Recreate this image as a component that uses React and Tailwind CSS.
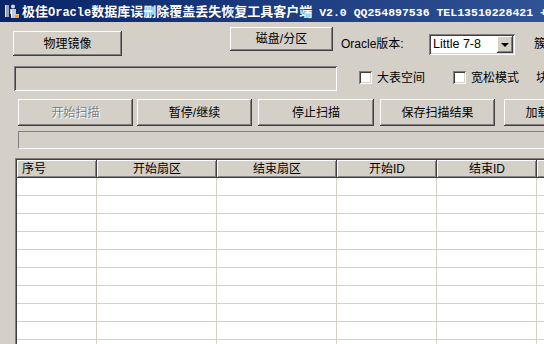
import React from 'react';

const raised = "bg-[#d4d0c8] shadow-[inset_-1px_-1px_0_#404040,inset_1px_1px_0_#ffffff,inset_-2px_-2px_0_#808080,inset_2px_2px_0_#d4d0c8]";
const sunken = "shadow-[inset_1px_1px_0_#808080,inset_-1px_-1px_0_#ffffff,inset_2px_2px_0_#404040,inset_-2px_-2px_0_#d4d0c8]";

const columns = [
  { label: '序号', w: 'w-[80px]', left: true },
  { label: '开始扇区', w: 'w-[120px]' },
  { label: '结束扇区', w: 'w-[120px]' },
  { label: '开始ID', w: 'w-[100px]' },
  { label: '结束ID', w: 'w-[100px]' },
  { label: '', w: 'w-[100px]' },
];

function Button({ children, className, disabled }) {
  return (
    <div className={`${raised} ${className} shrink-0 flex items-center justify-center text-[12px]`}>
      <span className={disabled ? 'text-[#808080] [text-shadow:1px_1px_0_#ffffff]' : 'text-black'}>{children}</span>
    </div>
  );
}

function Checkbox({ label, className }) {
  return (
    <div className={`flex items-center shrink-0 ${className}`}>
      <div className={`w-[13px] h-[13px] bg-white ${sunken}`} />
      <span className="ml-[5px] text-[12px] text-black">{label}</span>
    </div>
  );
}

function AppIcon() {
  return (
    <svg width="16" height="16" viewBox="0 0 16 16" className="shrink-0">
      <rect x="1" y="2" width="4" height="12" fill="#9aa3b5" />
      <rect x="1" y="2" width="1" height="12" fill="#e8ecf4" />
      <circle cx="9" cy="3.5" r="2" fill="#d8dce4" />
      <path d="M6 6h6v5h-1v4H7v-4H6z" fill="#c4c9d4" />
      <path d="M7 7h1v7H7z" fill="#ffffff" />
      <rect x="11" y="11" width="4" height="4" fill="#f0a020" />
      <rect x="11" y="11" width="4" height="1" fill="#ffd070" />
    </svg>
  );
}

function TitleBar() {
  const cjk = "font-['Noto_Sans_CJK_SC',sans-serif] text-[13px] leading-none";
  const mono = "font-['Liberation_Mono',monospace] leading-none";
  return (
    <div className="h-[22px] shrink-0 flex items-center pl-[4px] bg-gradient-to-r from-[#0a246a] to-[#2f5394] text-white font-bold whitespace-nowrap overflow-hidden">
      <AppIcon />
      <div className="ml-[2px] flex items-baseline">
        <span className={cjk}>极佳</span>
        <span className={`${mono} text-[12px]`}>Oracle</span>
        <span className={cjk}>数据库误删除覆盖丢失恢复工具客户端</span>
        <span className={`${mono} text-[11.5px] whitespace-pre`}> V2.0 QQ254897536 TEL13510228421 +</span>
      </div>
    </div>
  );
}

export default function App() {
  return (
    <div className="w-[544px] h-[344px] overflow-hidden bg-[#d4d0c8] flex flex-col font-['Liberation_Sans','Noto_Sans_CJK_SC',sans-serif] text-[12px] leading-none">
      <TitleBar />

      {/* top row: mirror, disk, version */}
      <div className="h-[44px] shrink-0 flex items-start whitespace-nowrap">
        <Button className="ml-[13px] mt-[9px] w-[109px] h-[25px]">物理镜像</Button>
        <Button className="ml-[108px] mt-[5px] w-[103px] h-[24px]">磁盘/分区</Button>
        <span className="ml-[8px] mt-[16px] w-[88px] shrink-0 text-black">Oracle版本:</span>
        <div className={`mt-[12px] w-[86px] h-[21px] shrink-0 bg-white ${sunken} flex items-center pl-[4px] pr-[2px]`}>
          <span className="flex-1 text-[12.5px] text-black">Little 7-8</span>
          <div className={`${raised} w-[16px] h-[17px] flex items-center justify-center`}>
            <div className="w-0 h-0 border-l-[4px] border-r-[4px] border-t-[4px] border-l-transparent border-r-transparent border-t-black" />
          </div>
        </div>
        <span className="ml-[19px] mt-[16px] text-black">簇</span>
      </div>

      {/* second row: path box and options */}
      <div className="h-[33px] shrink-0 flex items-start whitespace-nowrap">
        <div className={`ml-[14px] w-[323px] h-[25px] shrink-0 bg-[#d4d0c8] ${sunken}`} />
        <Checkbox label="大表空间" className="ml-[22px] mt-[5px]" />
        <Checkbox label="宽松模式" className="ml-[28px] mt-[5px]" />
        <span className="ml-[17px] mt-[6px] text-black">块</span>
      </div>

      {/* scan buttons */}
      <div className="h-[32px] shrink-0 flex items-start whitespace-nowrap">
        <Button className="ml-[18px] w-[115px] h-[27px]" disabled>开始扫描</Button>
        <Button className="ml-[4px] w-[115px] h-[27px]">暂停/继续</Button>
        <Button className="ml-[6px] w-[116px] h-[27px]">停止扫描</Button>
        <Button className="ml-[6px] w-[115px] h-[27px]">保存扫描结果</Button>
        <Button className="ml-[9px] w-[115px] h-[27px]">加载扫描结果</Button>
      </div>

      {/* progress bar */}
      <div className="ml-[18px] w-[540px] h-[18px] shrink-0 border-t border-l border-[#808080] border-b border-b-white" />

      {/* result list */}
      <div className="ml-[15px] mt-[9px] w-[540px] flex-1 border-t border-l border-[#808080]">
        <div className="h-full border-t border-l border-[#404040] bg-white flex flex-col">
          <div className="h-[18px] shrink-0 flex">
            {columns.map((c, i) => (
              <div key={i} className={`${c.w} ${raised} shrink-0 h-full flex items-center text-black ${c.left ? 'justify-start pl-[5px]' : 'justify-center'}`}>
                {c.label}
              </div>
            ))}
          </div>
          {Array.from({ length: 10 }).map((_, r) => (
            <div key={r} className="h-[18px] shrink-0 flex">
              {columns.map((c, i) => (
                <div key={i} className={`${c.w} shrink-0 h-full border-r border-b border-[#d4d0c8]`} />
              ))}
            </div>
          ))}
        </div>
      </div>
    </div>
  );
}
